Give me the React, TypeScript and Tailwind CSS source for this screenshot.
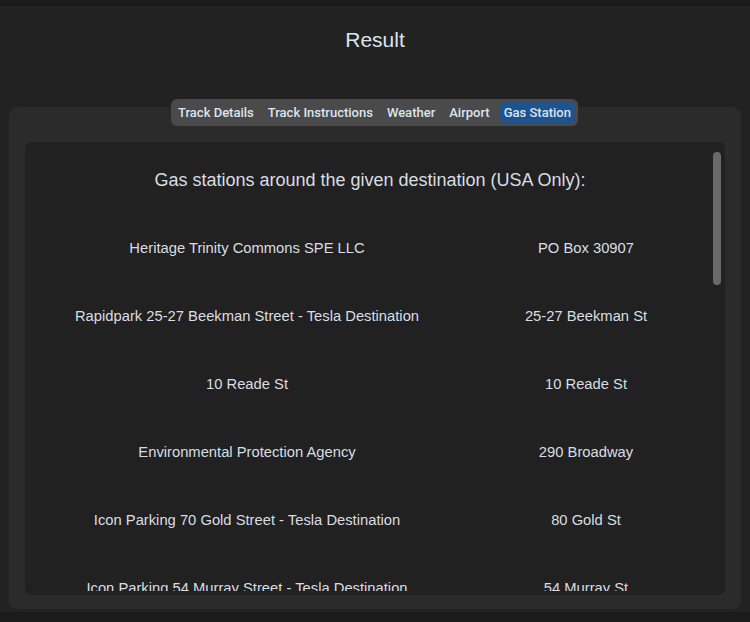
const tabs = ["Track Details", "Track Instructions", "Weather", "Airport", "Gas Station"];

const stations: [string, string][] = [
  ["Heritage Trinity Commons SPE LLC", "PO Box 30907"],
  ["Rapidpark 25-27 Beekman Street - Tesla Destination", "25-27 Beekman St"],
  ["10 Reade St", "10 Reade St"],
  ["Environmental Protection Agency", "290 Broadway"],
  ["Icon Parking 70 Gold Street - Tesla Destination", "80 Gold St"],
  ["Icon Parking 54 Murray Street - Tesla Destination", "54 Murray St"],
];

const TabBar = ({ active }: { active: string }) => (
  <div className="relative z-10 flex justify-center">
    <div className="ml-[-1px] flex gap-[6px] rounded-[6px] bg-[#4a4a4a] p-[3px] font-['Roboto',sans-serif] text-[13px] font-medium leading-[21px] text-[#dce4ee]">
      {tabs.map((t) => (
        <div
          key={t}
          className={
            t === active
              ? "rounded-[5px] bg-[#1f538d] px-[4px]"
              : "rounded-[5px] px-[4px]"
          }
        >
          {t}
        </div>
      ))}
    </div>
  </div>
);

export default function App() {
  return (
    <div className="h-[622px] w-[750px] bg-[#1b1b1b] pt-[6px] pb-[10px]">
      <div className="flex h-full flex-col bg-[#222222]">
        <h1 className="pt-[22px] text-center font-['Liberation_Sans',Arial,sans-serif] text-[21px] leading-[24px] text-[#dce4ee]">
          Result
        </h1>

        <div className="mt-[47px]">
          <TabBar active="Gas Station" />
          <div className="mx-[9px] -mt-[19px] h-[502px] rounded-[8px] bg-[#2b2b2b] px-[16px] pt-[35px] pb-[14px]">
            <div className="flex h-full rounded-[6px] bg-[#212121]">
              <div className="h-[449px] w-[686px] overflow-hidden font-['Liberation_Sans',Arial,sans-serif] text-[#d9dde2]">
                <p className="pt-[27px] pb-[23px] pl-[4px] text-center text-[18px] leading-[22px]">
                  Gas stations around the given destination (USA Only):
                </p>
                {stations.map(([name, addr]) => (
                  <div key={name} className="grid h-[68px] grid-cols-[444px_234px] items-center text-[14.75px]">
                    <span className="text-center">{name}</span>
                    <span className="text-center">{addr}</span>
                  </div>
                ))}
              </div>
              <div className="w-[14px] pt-[10px] pl-[2px]">
                <div className="h-[133px] w-[8px] rounded-full bg-[#696969]" />
              </div>
            </div>
          </div>
        </div>
      </div>
    </div>
  );
}
